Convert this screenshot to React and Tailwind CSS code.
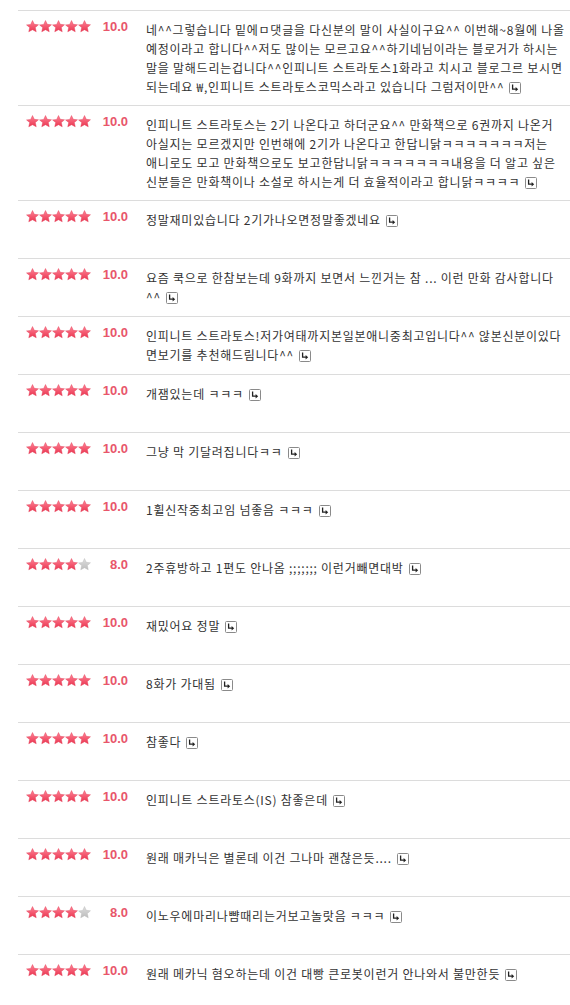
import React from 'react';

// 평점 목록 데이터
const reviews = [
  {
    score: 10,
    lines: [
      '네^^그렇습니다 밑에ㅁ댓글을 다신분의 말이 사실이구요^^ 이번해~8월에 나올',
      '예정이라고 합니다^^저도 많이는 모르고요^^하기네님이라는 블로거가 하시는',
      '말을 말해드리는겁니다^^인피니트 스트라토스1화라고 치시고 블로그르 보시면',
      '되는데요 ₩,인피니트 스트라토스코믹스라고 있습니다 그럼저이만^^',
    ],
  },
  {
    score: 10,
    lines: [
      '인피니트 스트라토스는 2기 나온다고 하더군요^^ 만화책으로 6권까지 나온거',
      '아실지는 모르겠지만 인번해에 2기가 나온다고 한답니닭ㅋㅋㅋㅋㅋㅋㅋ저는',
      '애니로도 모고 만화책으로도 보고한답니닭ㅋㅋㅋㅋㅋㅋㅋ내용을 더 알고 싶은',
      '신분들은 만화책이나 소설로 하시는게 더 효율적이라고 합니닭ㅋㅋㅋㅋ',
    ],
  },
  { score: 10, lines: ['정말재미있습니다 2기가나오면정말좋겠네요'] },
  {
    score: 10,
    lines: ['요즘 쿡으로 한참보는데 9화까지 보면서 느낀거는 참 ... 이런 만화 감사합니다', '^^'],
  },
  {
    score: 10,
    lines: ['인피니트 스트라토스!저가여태까지본일본애니중최고입니다^^ 않본신분이있다', '면보기를 추천해드림니다^^'],
  },
  { score: 10, lines: ['개잼있는데 ㅋㅋㅋ'] },
  { score: 10, lines: ['그냥 막 기달려집니다ㅋㅋ'] },
  { score: 10, lines: ['1휠신작중최고임 넘좋음 ㅋㅋㅋ'] },
  { score: 8, lines: ['2주휴방하고 1편도 안나옴 ;;;;;;; 이런거빼면대박'] },
  { score: 10, lines: ['재밌어요 정말'] },
  { score: 10, lines: ['8화가 가대됨'] },
  { score: 10, lines: ['참좋다'] },
  { score: 10, lines: ['인피니트 스트라토스(IS) 참좋은데'] },
  { score: 10, lines: ['원래 매카닉은 별론데 이건 그나마 괜찮은듯....'] },
  { score: 8, lines: ['이노우에마리나뺨때리는거보고놀랏음 ㅋㅋㅋ'] },
  { score: 10, lines: ['원래 메카닉 혐오하는데 이건 대빵 큰로봇이런거 안나와서 불만한듯'] },
];

const Star = ({ on, id }) => (
  <svg width="13" height="13" viewBox="0 0 24 24" className="block">
    <defs>
      <linearGradient id={id} x1="0" y1="0" x2="0" y2="1">
        <stop offset="0" stopColor={on ? '#ff8396' : '#dedede'} />
        <stop offset="1" stopColor={on ? '#ea3550' : '#bcbcbc'} />
      </linearGradient>
    </defs>
    <path
      d="M12 1l3.3 7 7.7.8-5.8 5.2 1.7 7.7L12 17.9l-6.9 3.8 1.7-7.7L1 9l7.7-.8z"
      fill={`url(#${id})`}
      stroke={on ? '#e33d57' : '#b8b8b8'}
      strokeWidth="0.8"
      strokeLinejoin="round"
    />
  </svg>
);

const Stars = ({ score, idx }) => {
  const filled = Math.round(score / 2);
  return (
    <div className="flex">
      {[0, 1, 2, 3, 4].map((i) => (
        <Star key={i} on={i < filled} id={`st-${idx}-${i}`} />
      ))}
    </div>
  );
};

// 답글 아이콘
const ReplyIcon = () => (
  <svg width="12" height="12" viewBox="0 0 12 12" className="inline-block align-[-2px] ml-[5px]">
    <rect x="0.5" y="0.5" width="11" height="11" rx="1" fill="#fff" stroke="#8a8a8a" />
    <path d="M3.6 2.6v4.6h3.6" fill="none" stroke="#222" strokeWidth="1.3" />
    <path d="M6.6 4.9l2.6 2.3-2.6 2.3z" fill="#222" />
  </svg>
);

const Row = ({ review, idx }) => (
  <div className="flex min-h-[58px] border-t border-[#dcdcdc]">
    <div className="w-[110px] shrink-0 flex items-start pl-[8px] pt-[9px]">
      <Stars score={review.score} idx={idx} />
      <span
        className="flex-1 text-right text-[13px] font-bold leading-[14px] text-[#e8566a]"
        style={{ fontFamily: '"Liberation Sans", Arial, sans-serif' }}
      >
        {review.score.toFixed(1)}
      </span>
    </div>
    <div className="ml-[18px] flex-1 pt-[9px] pb-[9px] text-[12px] leading-[19px] tracking-[0.75px] text-[#333] whitespace-nowrap overflow-hidden">
      {review.lines.map((line, i) => (
        <div key={i}>
          {line}
          {i === review.lines.length - 1 && <ReplyIcon />}
        </div>
      ))}
    </div>
  </div>
);

export default function App() {
  return (
    <div
      className="w-[570px] h-[1005px] overflow-hidden bg-white pt-[10px] pl-[18px]"
      style={{ fontFamily: '"Noto Sans CJK KR", "Liberation Sans", sans-serif' }}
    >
      {reviews.map((r, i) => (
        <Row key={i} review={r} idx={i} />
      ))}
    </div>
  );
}
